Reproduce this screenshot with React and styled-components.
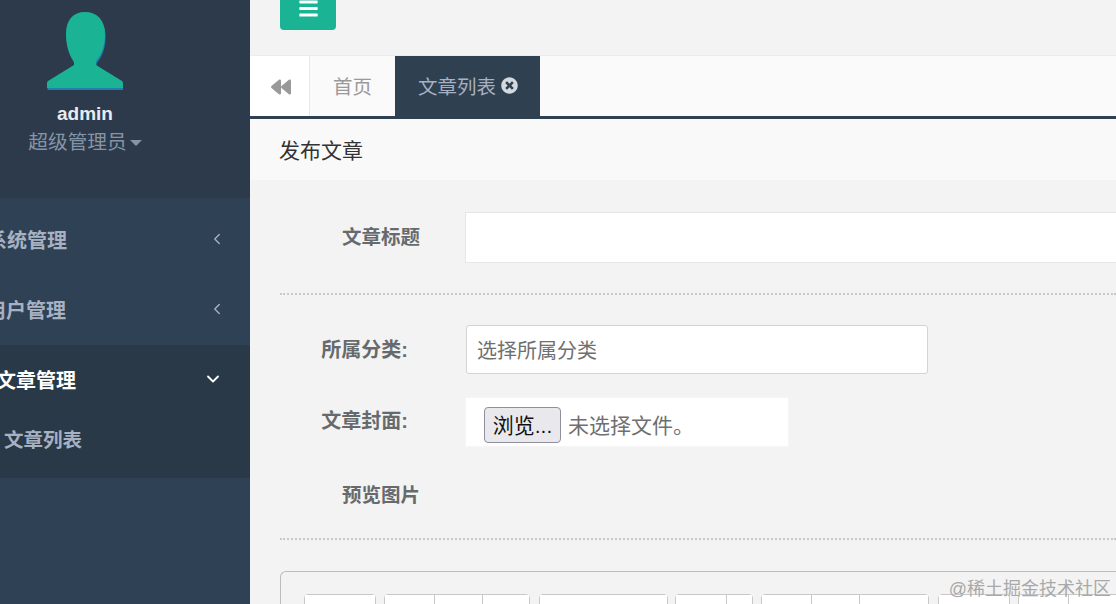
import React from 'react';
import styled, { createGlobalStyle } from 'styled-components';
import { FaBars, FaBackward, FaTimesCircle } from 'react-icons/fa';
import { ChevronLeft, ChevronDown } from 'lucide-react';

const CN = `"Liberation Sans", "Noto Sans CJK SC", sans-serif`;

const Global = createGlobalStyle`
  html, body { margin: 0; padding: 0; height: 100%; overflow: hidden; }
  body { font-family: ${CN}; background: #f3f3f3; }
  * { box-sizing: border-box; }
`;

const Page = styled.div`
  display: flex;
  width: 1116px;
  height: 604px;
  overflow: hidden;
  position: relative;
`;

const Sidebar = styled.aside`
  width: 250px;
  flex: none;
  background: #2f4155;
  overflow: hidden;
`;

const Profile = styled.div`
  width: 250px;
  height: 198px;
  background: #2d3a4b;
  display: flex;
  flex-direction: column;
  align-items: center;
  padding: 12px 80px 0 0;
`;

const AdminName = styled.div`
  margin-top: 12px;
  color: #e8ecf2;
  font-size: 19px;
  font-weight: 700;
  line-height: 24px;
`;

const Role = styled.div`
  display: flex;
  align-items: center;
  color: #8595a6;
  font-size: 19.7px;
  line-height: 32px;
`;

const Caret = styled.span`
  margin-left: 3px;
  margin-top: 2px;
  border-left: 6px solid transparent;
  border-right: 6px solid transparent;
  border-top: 6px solid #8595a6;
`;

const NavList = styled.nav`
  padding-top: 7px;
`;

const NavRow = styled.div`
  height: 70px;
  display: flex;
  align-items: center;
  justify-content: space-between;
  padding: 0 ${p => (p.$open ? 27 : 24)}px 2px 0;
  margin-left: ${p => p.$indent}px;
  color: ${p => (p.$open ? '#ffffff' : '#a7b1c2')};
  font-size: 20px;
  font-weight: 700;
`;

const NavGroup = styled.div`
  background: #2a3947;
  height: 133px;
`;

const SubRow = styled.div`
  height: 48px;
  display: flex;
  align-items: center;
  padding: 0 0 2px 4px;
  color: #a7b1c2;
  font-size: 19.5px;
  font-weight: 700;
`;

const Main = styled.main`
  flex: 1;
  min-width: 0;
  display: flex;
  flex-direction: column;
`;

const TopBar = styled.header`
  height: 56px;
  flex: none;
  padding-left: 30px;
  background: #f3f3f3;
  border-bottom: 1px solid #ececec;
`;

const MenuButton = styled.button`
  width: 56px;
  height: 30px;
  border: 0;
  border-radius: 0 0 4px 4px;
  background: #1ab394;
  color: #fff;
  font-size: 21px;
  display: flex;
  align-items: center;
  justify-content: center;
  padding: 0 0 14px;
`;

const TabBar = styled.nav`
  height: 63px;
  flex: none;
  display: flex;
  background: #fafafa;
  border-bottom: 3px solid #2f4050;
`;

const BackTab = styled.div`
  width: 60px;
  background: #fff;
  border-right: 1px solid #e7e7e7;
  color: #999;
  font-size: 20px;
  padding: 2px 0 0 2px;
  display: flex;
  align-items: center;
  justify-content: center;
`;

const Tab = styled.div`
  display: flex;
  align-items: center;
  gap: 5px;
  padding: 0 ${p => (p.$active ? 22 : 23)}px 2px 23px;
  font-size: 19.5px;
  color: ${p => (p.$active ? '#a7b1c2' : '#999')};
  background: ${p => (p.$active ? '#2f4050' : 'transparent')};
  svg { font-size: 17px; color: #d5d9de; }
`;

const TitleBar = styled.div`
  height: 61px;
  flex: none;
  padding: 0 0 2px 29px;
  display: flex;
  align-items: center;
  background: #f9f9f9;
  color: #333;
  font-size: 21px;
`;

const Form = styled.form`
  flex: 1;
  padding: 32px 0 0 30px;
  overflow: hidden;
`;

const Row = styled.div`
  display: flex;
  align-items: center;
  height: ${p => p.$height}px;
  margin-top: ${p => p.$top || 0}px;
  margin-bottom: ${p => p.$gap || 0}px;
`;

const Label = styled.label`
  width: 140px;
  flex: none;
  padding: 0 ${p => p.$right || 0}px ${p => p.$lift}px 0;
  text-align: right;
  color: #676a6c;
  font-size: ${p => (p.$right ? 20 : 19.5)}px;
  font-weight: 700;
  white-space: nowrap;
`;

const Spacer = styled.div`
  width: 45px;
  flex: none;
`;

const TitleInput = styled.div`
  flex: 1;
  height: 51px;
  background: #fff;
  border: 1px solid #e5e6e7;
  border-right: 0;
`;

const SelectBox = styled.div`
  width: 462px;
  height: 49px;
  margin-left: 1px;
  padding: 0 0 1px 10px;
  display: flex;
  align-items: center;
  background: #fff;
  border: 1px solid #d4d4d4;
  border-radius: 3px;
  color: #6f6f6f;
  font-size: 20px;
`;

const FileBox = styled.div`
  width: 324px;
  height: 50px;
  padding: 9px 0 0 18px;
  display: flex;
  align-items: flex-start;
  gap: 7px;
  background: #fff;
  border: 1px solid #f6f6f6;
  color: #6f6f6f;
  font-size: 21px;
  line-height: 38px;
`;

const BrowseButton = styled.span`
  width: 77px;
  height: 36px;
  padding-top: 2px;
  display: flex;
  align-items: center;
  justify-content: center;
  background: #e9e9ed;
  border: 1px solid #8f8f9d;
  border-radius: 4px;
  color: #111;
  font-size: 21px;
`;

const Dotted = styled.div`
  border-top: 2px dotted #c9c9c9;
`;

const Editor = styled.div`
  height: 60px;
  margin-top: 31px;
  padding: 22px 0 0 23px;
  border: 1px solid #bdbdbd;
  border-right: 0;
  border-radius: 6px 0 0 0;
  display: flex;
`;

const ToolGroup = styled.div`
  display: flex;
  flex: none;
  margin-right: ${p => p.$gap}px;
  border: 1px solid #c8c8c8;
  border-radius: 4px 4px 0 0;
  height: 30px;
`;

const ToolBtn = styled.div`
  width: ${p => p.$w}px;
  background: #fff;
  & + & { border-left: 1px solid #c8c8c8; }
`;

const Watermark = styled.div`
  position: absolute;
  right: 5px;
  bottom: 4px;
  color: #a9a9a9;
  font-size: 18px;
  line-height: 22px;
`;

const toolbar = [
  { gap: 8, btns: [70] },
  { gap: 9, btns: [49, 48, 47] },
  { gap: 7, btns: [127] },
  { gap: 8, btns: [50, 26] },
  { gap: 9, btns: [49, 48, 69] },
  { gap: 8, btns: [70] },
  { gap: 0, btns: [49, 60] },
];

const AVATAR = 'M38 0C26 0 19 8 19 22c0 11 3 20 7 26 1 1 1 2 1 4v1L1 69c-1 1-1 2-1 3v3c0 1 0 1 1 1h74c1 0 1 0 1-1v-3c0-1 0-2-1-3L49 53v-1c0-2 0-3 1-4 5-6 8-15 8-26C58 8 50 0 38 0z';

const Avatar = () => (
  <svg width="76" height="78" viewBox="0 0 76 78">
    <path d={AVATAR} fill="#1f7fb0" transform="translate(0.6 2)" />
    <path d={AVATAR} fill="#1ab394" />
  </svg>
);

const App = () => (
  <Page>
    <Global />
    <Sidebar>
      <Profile>
        <Avatar />
        <AdminName>admin</AdminName>
        <Role>超级管理员<Caret /></Role>
      </Profile>
      <NavList>
        <NavRow $indent={-13}>系统管理<ChevronLeft size={18} strokeWidth={1.8} /></NavRow>
        <NavRow $indent={-14}>用户管理<ChevronLeft size={18} strokeWidth={1.8} /></NavRow>
        <NavGroup>
          <NavRow $indent={-4} $open>文章管理<ChevronDown size={20} strokeWidth={2.2} /></NavRow>
          <SubRow>文章列表</SubRow>
        </NavGroup>
      </NavList>
    </Sidebar>
    <Main>
      <TopBar>
        <MenuButton type="button" aria-label="menu"><FaBars /></MenuButton>
      </TopBar>
      <TabBar>
        <BackTab><FaBackward /></BackTab>
        <Tab>首页</Tab>
        <Tab $active>文章列表<FaTimesCircle /></Tab>
      </TabBar>
      <TitleBar>发布文章</TitleBar>
      <Form>
        <Row $height={51} $gap={30}>
          <Label $lift={4}>文章标题</Label>
          <Spacer />
          <TitleInput />
        </Row>
        <Dotted />
        <Row $height={49} $gap={23} $top={30}>
          <Label $lift={2} $right={12}>所属分类:</Label>
          <Spacer />
          <SelectBox>选择所属分类</SelectBox>
        </Row>
        <Row $height={50} $gap={22}>
          <Label $lift={6} $right={12}>文章封面:</Label>
          <Spacer />
          <FileBox><BrowseButton>浏览...</BrowseButton>未选择文件。</FileBox>
        </Row>
        <Row $height={50} $gap={19}>
          <Label $lift={2}>预览图片</Label>
        </Row>
        <Dotted />
        <Editor>
          {toolbar.map((g, i) => (
            <ToolGroup key={i} $gap={g.gap}>
              {g.btns.map((w, j) => <ToolBtn key={j} $w={w} />)}
            </ToolGroup>
          ))}
        </Editor>
      </Form>
    </Main>
    <Watermark>@稀土掘金技术社区</Watermark>
  </Page>
);

export default App;
